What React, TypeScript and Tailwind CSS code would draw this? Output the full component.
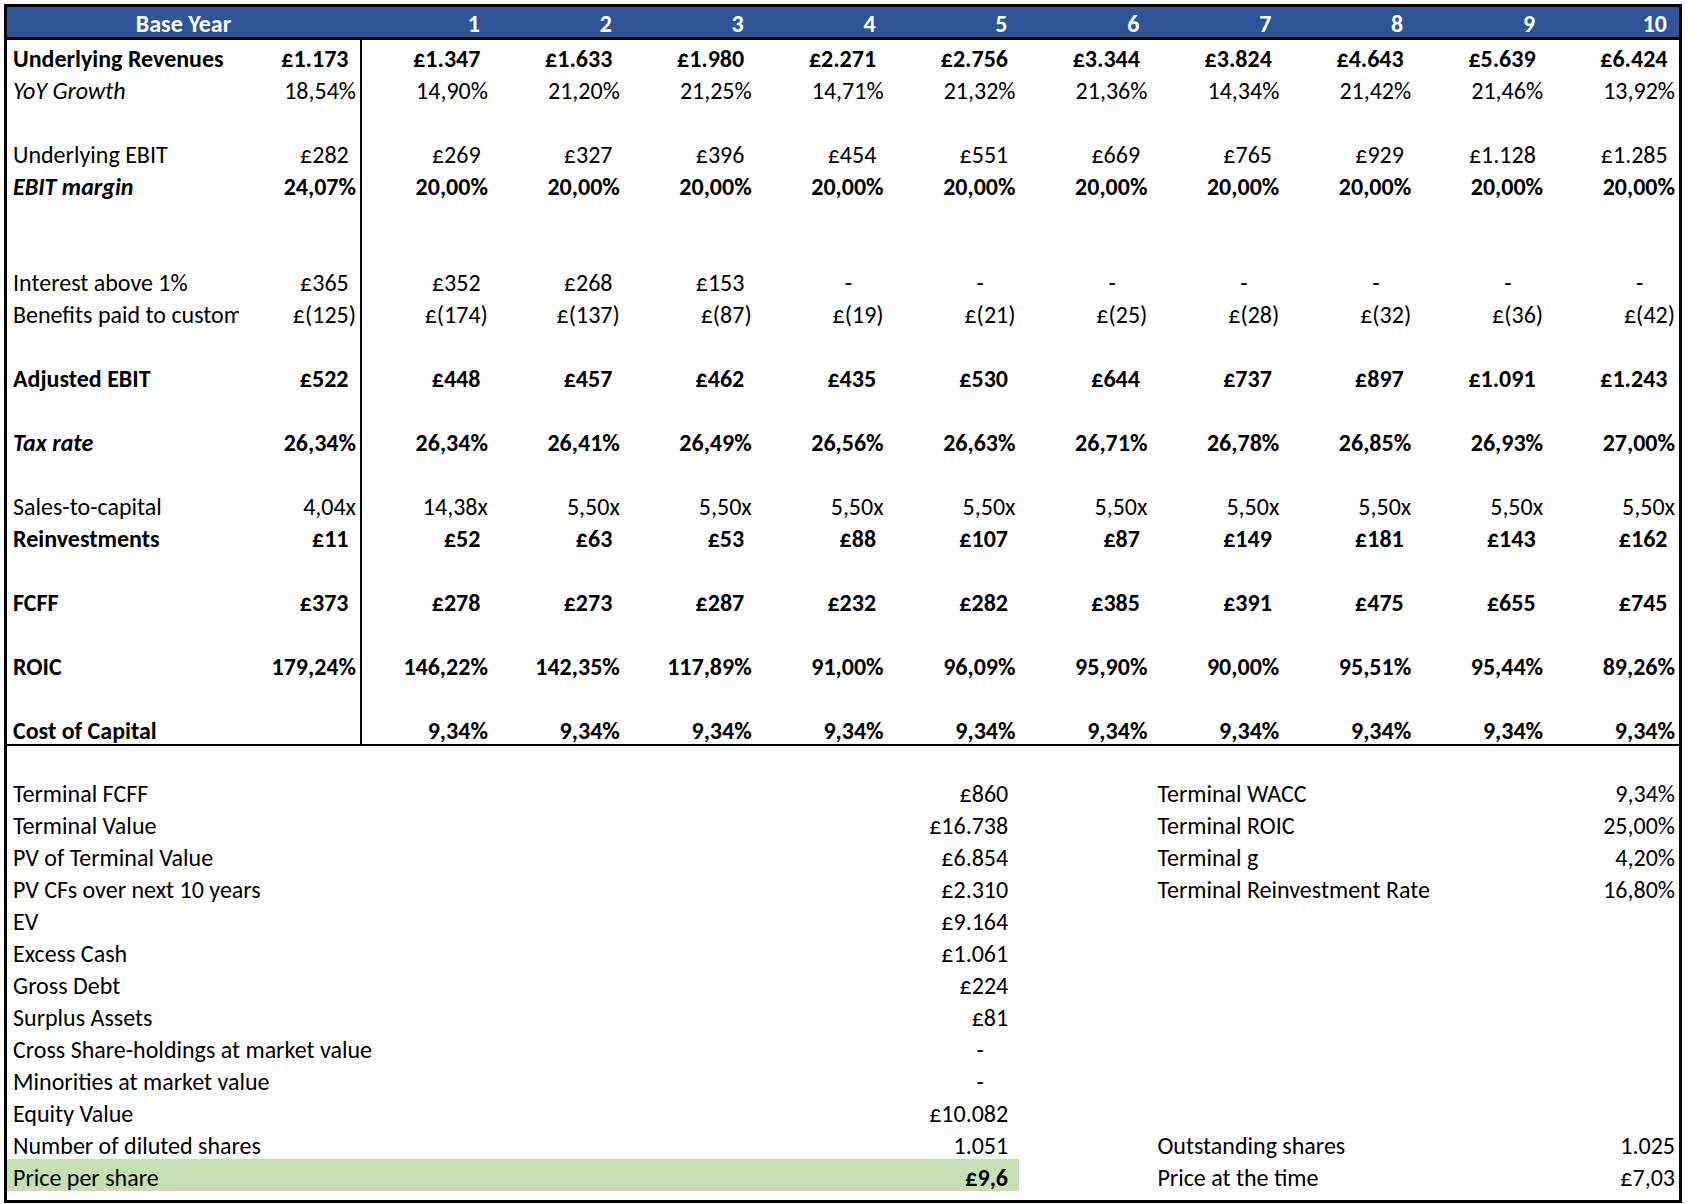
import React from 'react';

type Row = {
  label?: string;
  labelClass?: string;
  valClass?: string;
  base?: string;
  vals?: string[];
};

const COLS = 'grid grid-cols-[232px_121px_repeat(10,minmax(0,1fr))]';

const rows: Row[] = [
  {
    label: 'Underlying Revenues',
    labelClass: 'font-bold',
    valClass: 'font-bold',
    base: '£1.173',
    vals: ['£1.347', '£1.633', '£1.980', '£2.271', '£2.756', '£3.344', '£3.824', '£4.643', '£5.639', '£6.424'],
  },
  {
    label: 'YoY Growth',
    labelClass: 'italic',
    base: '18,54%',
    vals: ['14,90%', '21,20%', '21,25%', '14,71%', '21,32%', '21,36%', '14,34%', '21,42%', '21,46%', '13,92%'],
  },
  {},
  {
    label: 'Underlying EBIT',
    base: '£282',
    vals: ['£269', '£327', '£396', '£454', '£551', '£669', '£765', '£929', '£1.128', '£1.285'],
  },
  {
    label: 'EBIT margin',
    labelClass: 'font-bold italic',
    valClass: 'font-bold',
    base: '24,07%',
    vals: Array(10).fill('20,00%'),
  },
  {},
  {},
  {
    label: 'Interest above 1%',
    base: '£365',
    vals: ['£352', '£268', '£153', '-', '-', '-', '-', '-', '-', '-'],
  },
  {
    label: 'Benefits paid to customers',
    base: '£(125)',
    vals: ['£(174)', '£(137)', '£(87)', '£(19)', '£(21)', '£(25)', '£(28)', '£(32)', '£(36)', '£(42)'],
  },
  {},
  {
    label: 'Adjusted EBIT',
    labelClass: 'font-bold',
    valClass: 'font-bold',
    base: '£522',
    vals: ['£448', '£457', '£462', '£435', '£530', '£644', '£737', '£897', '£1.091', '£1.243'],
  },
  {},
  {
    label: 'Tax rate',
    labelClass: 'font-bold italic',
    valClass: 'font-bold',
    base: '26,34%',
    vals: ['26,34%', '26,41%', '26,49%', '26,56%', '26,63%', '26,71%', '26,78%', '26,85%', '26,93%', '27,00%'],
  },
  {},
  {
    label: 'Sales-to-capital',
    base: '4,04x',
    vals: ['14,38x', ...Array(9).fill('5,50x')],
  },
  {
    label: 'Reinvestments',
    labelClass: 'font-bold',
    valClass: 'font-bold',
    base: '£11',
    vals: ['£52', '£63', '£53', '£88', '£107', '£87', '£149', '£181', '£143', '£162'],
  },
  {},
  {
    label: 'FCFF',
    labelClass: 'font-bold',
    valClass: 'font-bold',
    base: '£373',
    vals: ['£278', '£273', '£287', '£232', '£282', '£385', '£391', '£475', '£655', '£745'],
  },
  {},
  {
    label: 'ROIC',
    labelClass: 'font-bold',
    valClass: 'font-bold',
    base: '179,24%',
    vals: ['146,22%', '142,35%', '117,89%', '91,00%', '96,09%', '95,90%', '90,00%', '95,51%', '95,44%', '89,26%'],
  },
  {},
  {
    label: 'Cost of Capital',
    labelClass: 'font-bold',
    valClass: 'font-bold',
    base: '',
    vals: Array(10).fill('9,34%'),
  },
];

type Summary = {
  label: string;
  value: string;
  pad?: boolean;
  right?: [string, string];
  highlight?: boolean;
};

const summary: Summary[] = [
  { label: 'Terminal FCFF', value: '£860', right: ['Terminal WACC', '9,34%'] },
  { label: 'Terminal Value', value: '£16.738', right: ['Terminal ROIC', '25,00%'] },
  { label: 'PV of Terminal Value', value: '£6.854', right: ['Terminal g', '4,20%'] },
  { label: 'PV CFs over next 10 years', value: '£2.310', right: ['Terminal Reinvestment Rate', '16,80%'] },
  { label: 'EV', value: '£9.164' },
  { label: 'Excess Cash', value: '£1.061' },
  { label: 'Gross Debt', value: '£224' },
  { label: 'Surplus Assets', value: '£81' },
  { label: 'Cross Share-holdings at market value', value: '-' },
  { label: 'Minorities at market value', value: '-' },
  { label: 'Equity Value', value: '£10.082' },
  { label: 'Number of diluted shares', value: '1.051', pad: true, right: ['Outstanding shares', '1.025'] },
  { label: 'Price per share', value: '£9,6', highlight: true, right: ['Price at the time', '£7,03'] },
];

// excel accounting format: positive amounts leave room for a ")"
function Num({ v, pad }: { v: string; pad?: boolean }) {
  if (v === '-') {
    return (
      <span>
        -<span className="invisible">00)</span>
      </span>
    );
  }
  const withParen = pad ?? (v.startsWith('£') && !v.includes('('));
  return (
    <span>
      {v}
      {withParen && <span className="invisible">)</span>}
    </span>
  );
}

export default function App() {
  return (
    <div className="min-h-screen bg-white pt-[4px] pl-[4px] text-black [font-family:Carlito,Lato,sans-serif] text-[24px]">
      <div className="w-[1678px] border-[3px] border-black">
        {/* Header */}
        <div className={`${COLS} h-[33px] bg-[#2F5597] text-white font-bold border-b-[3px] border-black`}>
          <div className="col-span-2 flex items-end justify-center leading-[27px]">Base Year</div>
          {Array.from({ length: 10 }, (_, i) => (
            <div key={i} className="flex items-end justify-end pr-[12px] leading-[27px]">
              {i + 1}
            </div>
          ))}
        </div>

        {/* Projection rows */}
        <div className="border-b-2 border-black">
          {rows.map((r, idx) => (
            <div key={idx} className={`${COLS} h-[32px] leading-[26px]`}>
              <div className={`flex items-end pl-[6px] overflow-x-clip whitespace-nowrap ${r.labelClass ?? ''}`}>
                {r.label}
              </div>
              <div className={`flex items-end justify-end pr-[4px] whitespace-nowrap ${r.valClass ?? ''}`}>
                {r.base ? <Num v={r.base} /> : null}
              </div>
              {Array.from({ length: 10 }, (_, i) => (
                <div
                  key={i}
                  className={`flex items-end justify-end pr-[4px] whitespace-nowrap ${i === 0 ? 'border-l-2 border-black' : ''} ${r.valClass ?? ''}`}
                >
                  {r.vals ? <Num v={r.vals[i]} /> : null}
                </div>
              ))}
            </div>
          ))}
        </div>

        {/* Valuation summary */}
        <div className="pt-[29px] pb-[9px]">
          {summary.map((s) => (
            <div key={s.label} className={`${COLS} h-[32px] leading-[26px]`}>
              <div
                className={`col-span-6 flex items-end pl-[6px] whitespace-nowrap ${s.highlight ? 'bg-[#C6E0B4]' : ''}`}
              >
                {s.label}
              </div>
              <div
                className={`flex items-end justify-end pr-[4px] whitespace-nowrap ${s.highlight ? 'bg-[#C6E0B4] font-bold' : ''}`}
              >
                <Num v={s.value} pad={s.pad} />
              </div>
              <div />
              {s.right ? (
                <>
                  <div className="col-span-3 flex items-end pl-[6px] whitespace-nowrap">{s.right[0]}</div>
                  <div className="flex items-end justify-end pr-[4px] whitespace-nowrap">{s.right[1]}</div>
                </>
              ) : null}
            </div>
          ))}
        </div>
      </div>
    </div>
  );
}
